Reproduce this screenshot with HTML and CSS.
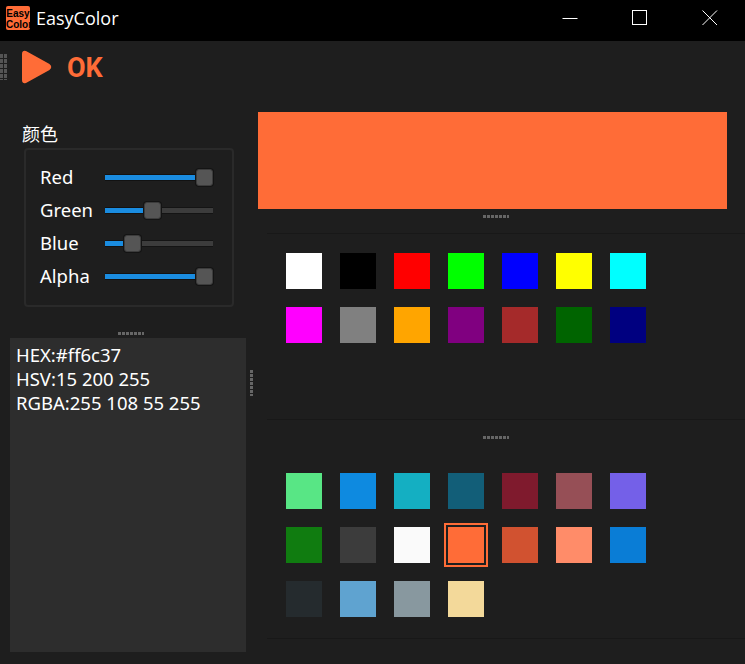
FILE: index.html
```html
<!DOCTYPE html>
<html lang="zh">
<head>
    <meta charset="UTF-8">
    <title>EasyColor</title>
    <link rel="stylesheet" href="styles.css">
</head>
<body>
    <header class="titlebar">
        <div class="logo">Easy<br>Color</div>
        <div class="app-name">EasyColor</div>
        <div class="win-buttons">
            <button class="win-btn">
                <svg width="16" height="16" viewBox="0 0 16 16"><path d="M0.5 8.5H15.5" stroke="#fff" fill="none"/></svg>
            </button>
            <button class="win-btn">
                <svg width="16" height="16" viewBox="0 0 16 16"><rect x="0.5" y="0.5" width="14" height="14" stroke="#fff" fill="none"/></svg>
            </button>
            <button class="win-btn">
                <svg width="16" height="16" viewBox="0 0 16 16"><path d="M0.5 0.5L15 15M15 0.5L0.5 15" stroke="#fff" fill="none"/></svg>
            </button>
        </div>
    </header>

    <div class="toolbar">
        <div class="grip-v"></div>
        <svg class="play" width="32" height="34" viewBox="0 0 32 34">
            <path d="M4.5 2L28 15Q30.5 17 28 19L4.5 32Q2 33 2 30V4Q2 1 4.5 2Z" fill="#ff6c37" stroke="#ff6c37" stroke-width="2" stroke-linejoin="round"/>
        </svg>
        <div class="ok">OK</div>
    </div>

    <main class="main">
        <section class="left">
            <div class="group-title">颜色</div>
            <div class="group">
                <div class="slider-row">
                    <label>Red</label>
                    <div class="slider">
                        <div class="fill" style="width: 90px"></div>
                        <div class="thumb"></div>
                    </div>
                </div>
                <div class="slider-row">
                    <label>Green</label>
                    <div class="slider">
                        <div class="fill" style="width: 38px"></div>
                        <div class="thumb"></div>
                        <div class="rest"></div>
                    </div>
                </div>
                <div class="slider-row">
                    <label>Blue</label>
                    <div class="slider">
                        <div class="fill" style="width: 18px"></div>
                        <div class="thumb"></div>
                        <div class="rest"></div>
                    </div>
                </div>
                <div class="slider-row">
                    <label>Alpha</label>
                    <div class="slider">
                        <div class="fill" style="width: 90px"></div>
                        <div class="thumb"></div>
                    </div>
                </div>
            </div>
            <div class="grip-h left-grip"></div>
            <div class="info">
                HEX:#ff6c37<br>
                HSV:15 200 255<br>
                RGBA:255 108 55 255
            </div>
        </section>

        <div class="grip-v mid-grip"></div>

        <section class="right">
            <div class="preview"></div>
            <div class="grip-h preview-grip"></div>
            <div class="palette palette-top">
                <div class="swatch" style="background: #ffffff"></div>
                <div class="swatch" style="background: #000000"></div>
                <div class="swatch" style="background: #ff0000"></div>
                <div class="swatch" style="background: #00ff00"></div>
                <div class="swatch" style="background: #0000ff"></div>
                <div class="swatch" style="background: #ffff00"></div>
                <div class="swatch" style="background: #00ffff"></div>
                <div class="swatch" style="background: #ff00ff"></div>
                <div class="swatch" style="background: #808080"></div>
                <div class="swatch" style="background: #ffa500"></div>
                <div class="swatch" style="background: #800080"></div>
                <div class="swatch" style="background: #a52a2a"></div>
                <div class="swatch" style="background: #006400"></div>
                <div class="swatch" style="background: #000080"></div>
            </div>
            <div class="grip-h palette-grip"></div>
            <div class="palette palette-bottom">
                <div class="swatch" style="background: #58e685"></div>
                <div class="swatch" style="background: #0e8ae0"></div>
                <div class="swatch" style="background: #14afc2"></div>
                <div class="swatch" style="background: #125e78"></div>
                <div class="swatch" style="background: #7f1a2d"></div>
                <div class="swatch" style="background: #964f56"></div>
                <div class="swatch" style="background: #7460e8"></div>
                <div class="swatch" style="background: #107c10"></div>
                <div class="swatch" style="background: #3c3c3c"></div>
                <div class="swatch" style="background: #fafafa"></div>
                <div class="swatch selected" style="background: #ff6c37"></div>
                <div class="swatch" style="background: #d15230"></div>
                <div class="swatch" style="background: #ff8c69"></div>
                <div class="swatch" style="background: #0a7dd6"></div>
                <div class="swatch" style="background: #252b2e"></div>
                <div class="swatch" style="background: #5fa3d0"></div>
                <div class="swatch" style="background: #88989f"></div>
                <div class="swatch" style="background: #f3d99a"></div>
            </div>
        </section>
    </main>
</body>
</html>
```

FILE: styles.css
```css
html, body {
    height: 100%;
}
body {
    margin: 0;
    padding: 0;
    background-color: #1e1e1e;
    color: #ffffff;
    font-family: "Noto Sans", "Noto Sans CJK SC", sans-serif;
    font-size: 18px;
    overflow: hidden;
}

/* title bar */
.titlebar {
    display: flex;
    align-items: center;
    box-sizing: border-box;
    height: 41px;
    padding-bottom: 5px;
    background-color: #000000;
}
.logo {
    box-sizing: border-box;
    width: 24px;
    height: 24px;
    margin-left: 6px;
    padding-top: 2px;
    border-radius: 2px;
    background-color: #ff6c37;
    color: #000000;
    font-family: "Liberation Sans", sans-serif;
    font-size: 10px;
    font-weight: 700;
    line-height: 11px;
    text-align: center;
}
.app-name {
    margin-left: 6px;
    font-family: "Open Sans", sans-serif;
    font-size: 18px;
}
.win-buttons {
    display: flex;
    margin-left: auto;
}
.win-btn {
    display: flex;
    align-items: center;
    justify-content: center;
    width: 70px;
    height: 36px;
    padding: 0;
    border: none;
    background: none;
}

/* toolbar */
.toolbar {
    display: flex;
    align-items: center;
    height: 52px;
}
.grip-v {
    width: 3px;
    height: 26px;
    background-image:
        repeating-linear-gradient(to bottom, #666 0 3px, transparent 3px 4px);
}
.toolbar .grip-v {
    width: 7px;
    background-image:
        repeating-linear-gradient(to bottom, transparent 0 4px, #1e1e1e 4px 5px),
        repeating-linear-gradient(to right, #555 0 3px, transparent 3px 4px);
}
.play {
    margin-left: 14px;
}
.ok {
    margin: 2px 0 0 14px;
    color: #ff6c37;
    font-family: "Roboto", sans-serif;
    font-size: 27px;
    font-weight: 700;
    line-height: 30px;
}

/* main area */
.main {
    display: flex;
    height: 571px;
}
.left {
    display: flex;
    flex-direction: column;
    width: 236px;
    margin-left: 10px;
}
.group-title {
    margin: 28px 0 1px 12px;
    font-size: 18px;
    line-height: 26px;
}
.group {
    display: flex;
    flex-direction: column;
    gap: 11px;
    box-sizing: border-box;
    width: 210px;
    height: 159px;
    margin-left: 14px;
    padding: 16px 19px 0 14px;
    border: 2px solid #2a2a2a;
    border-radius: 4px;
}
.slider-row {
    display: flex;
    align-items: center;
    height: 22px;
}
.slider-row label {
    width: 65px;
    font-size: 18.5px;
    line-height: 22px;
}
.slider {
    display: flex;
    align-items: center;
    width: 109px;
    height: 17px;
}
.fill {
    height: 5px;
    border: solid #121212;
    border-width: 1px 0;
    background-color: #1a8ce0;
}
.thumb {
    flex: none;
    box-sizing: border-box;
    width: 17px;
    height: 17px;
    margin-left: 1px;
    border: 1px solid #3c3c3c;
    border-radius: 3px;
    background-color: #555555;
    box-shadow: 0 0 0 1px #141414;
}
.rest {
    flex: 1;
    height: 5px;
    margin-left: 1px;
    border: solid #141414;
    border-width: 1px 0;
    background-color: #3c3c3c;
}
.grip-h {
    height: 3px;
    background-image:
        repeating-linear-gradient(to right, #666 0 3px, transparent 3px 4px);
}
.left-grip {
    width: 26px;
    margin: 25px 0 3px 108px;
}
.info {
    flex: 1;
    margin-bottom: 12px;
    padding: 5px 6px;
    background-color: #2d2d2d;
    font-size: 18.5px;
    line-height: 24px;
}
.mid-grip {
    flex: none;
    margin: 277px 0 0 4px;
}
.right {
    display: flex;
    flex-direction: column;
    flex: 1;
    margin-left: 5px;
}
.preview {
    width: 469px;
    height: 97px;
    margin-top: 19px;
    background-color: #ff6c37;
}
.preview-grip {
    width: 26px;
    margin: 6px 0 0 225px;
}
.palette {
    display: grid;
    grid-template-columns: repeat(7, 36px);
    grid-auto-rows: 36px;
    gap: 18px;
    align-content: start;
    margin-left: 9px;
    padding-left: 19px;
    border-top: 1px solid #181818;
}
.palette-top {
    height: 166px;
    margin-top: 15px;
    padding-top: 19px;
    border-bottom: 1px solid #181818;
}
.palette-grip {
    width: 26px;
    margin: 16px 0 0 225px;
}
.palette-bottom {
    height: 165px;
    padding-top: 34px;
    border-top: none;
    border-bottom: 1px solid #181818;
}
.swatch {
    width: 36px;
    height: 36px;
}
.swatch.selected {
    outline: 2px solid #ff6c37;
    outline-offset: 2px;
}
```
